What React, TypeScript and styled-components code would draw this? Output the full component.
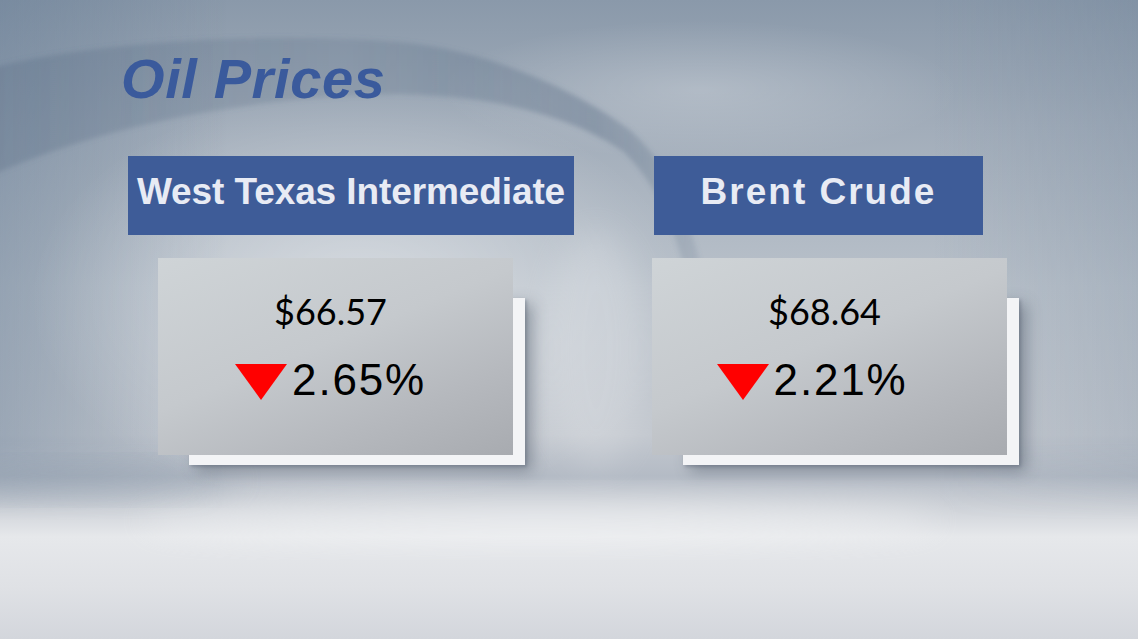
import React from "react";
import styled, { createGlobalStyle } from "styled-components";

const Global = createGlobalStyle`
  html, body { margin: 0; padding: 0; background: #d6d9de; overflow: hidden; }
  #root { width: 1138px; height: 639px; }
`;

const Stage = styled.div`
  width: 1138px;
  height: 639px;
  display: grid;
  overflow: hidden;
`;

const BackdropLayer = styled.svg`
  grid-area: 1 / 1;
  display: block;
`;

const Content = styled.main`
  grid-area: 1 / 1;
  display: flex;
  flex-direction: column;
  align-items: flex-start;
  padding: 51px 0 0 128px;
`;

const Title = styled.h1`
  margin: 0 0 49px -7px;
  font-family: "Liberation Sans", Arial, sans-serif;
  font-weight: 700;
  font-style: italic;
  font-size: 56px;
  line-height: 1;
  letter-spacing: 0.6px;
  color: #3a5a9c;
`;

const Row = styled.div`
  display: flex;
  gap: 78px;
  align-items: flex-start;
`;

const Column = styled.section`
  display: flex;
  flex-direction: column;
  align-items: flex-start;
  gap: 23px;
`;

const Header = styled.div<{ $width: number; $offset: number; $spacing: number }>`
  width: ${(p) => p.$width}px;
  height: 79px;
  margin-left: ${(p) => p.$offset}px;
  box-sizing: border-box;
  padding-top: 17px;
  background: #3e5c98;
  display: flex;
  justify-content: center;
  font-family: "Liberation Sans", Arial, sans-serif;
  font-weight: 700;
  font-size: 37px;
  line-height: 1;
  letter-spacing: ${(p) => p.$spacing}px;
  color: #e8ebf4;
  white-space: nowrap;
`;

const CardStack = styled.div<{ $offset: number }>`
  display: grid;
  margin-left: ${(p) => p.$offset}px;
`;

const Backing = styled.div`
  grid-area: 1 / 1;
  margin: 40px 0 0 31px;
  width: 336px;
  height: 167px;
  background: #f3f4f6;
  box-shadow: 7px 6px 14px rgba(70, 82, 98, 0.45), 2px 2px 3px rgba(70, 82, 98, 0.3);
`;

const Card = styled.div`
  grid-area: 1 / 1;
  width: 355px;
  height: 197px;
  box-sizing: border-box;
  padding: 35px 10px 0 0;
  display: flex;
  flex-direction: column;
  align-items: center;
  background: linear-gradient(158deg, #cfd4d7 0%, #c5c9cd 45%, #b5b8bd 75%, #a8abb0 100%);
`;

const Price = styled.div`
  font-family: Lato, "Open Sans", sans-serif;
  font-size: 36px;
  line-height: 1;
  color: #000;
`;

const ChangeRow = styled.div<{ $shift: number }>`
  display: flex;
  align-items: flex-start;
  gap: 5px;
  margin-top: 29px;
  margin-right: ${(p) => p.$shift}px;
`;

const DownArrow = styled.svg`
  display: block;
  margin-top: 6px;
`;

const Pct = styled.div`
  font-family: "Liberation Sans", Arial, sans-serif;
  font-size: 44px;
  line-height: 1;
  letter-spacing: 1.8px;
  color: #000;
`;

const Backdrop = () => (
  <BackdropLayer width="1138" height="639" viewBox="0 0 1138 639">
    <defs>
      <linearGradient id="bgV" x1="0" y1="0" x2="0" y2="1">
        <stop offset="0" stopColor="#8a99aa" />
        <stop offset="0.2" stopColor="#a2adba" />
        <stop offset="0.45" stopColor="#b9c1ca" />
        <stop offset="0.68" stopColor="#c3c8cf" />
        <stop offset="0.745" stopColor="#b4bbc5" />
        <stop offset="0.79" stopColor="#cdd1d7" />
        <stop offset="0.84" stopColor="#e6e8eb" />
        <stop offset="0.92" stopColor="#dfe1e5" />
        <stop offset="1" stopColor="#d3d6dc" />
      </linearGradient>
      <linearGradient id="bgH" x1="0" y1="0" x2="1" y2="0">
        <stop offset="0" stopColor="#5f7690" stopOpacity="0.4" />
        <stop offset="0.2" stopColor="#5f7690" stopOpacity="0" />
        <stop offset="0.82" stopColor="#5f7690" stopOpacity="0" />
        <stop offset="1" stopColor="#5f7690" stopOpacity="0.18" />
      </linearGradient>
      <linearGradient id="bgFade" x1="0" y1="0" x2="0" y2="1">
        <stop offset="0" stopColor="#fff" stopOpacity="1" />
        <stop offset="0.85" stopColor="#fff" stopOpacity="1" />
        <stop offset="1" stopColor="#fff" stopOpacity="0" />
      </linearGradient>
      <mask id="topMask">
        <rect width="1138" height="520" fill="url(#bgFade)" />
      </mask>
      <radialGradient id="glow" cx="0.5" cy="0.5" r="0.5">
        <stop offset="0" stopColor="#ffffff" stopOpacity="0.45" />
        <stop offset="1" stopColor="#ffffff" stopOpacity="0" />
      </radialGradient>
      <linearGradient id="ribbon" x1="0" y1="0" x2="1" y2="0">
        <stop offset="0" stopColor="#5a6e86" stopOpacity="0.34" />
        <stop offset="0.5" stopColor="#5a6e86" stopOpacity="0.22" />
        <stop offset="0.85" stopColor="#5a6e86" stopOpacity="0.4" />
        <stop offset="1" stopColor="#5a6e86" stopOpacity="0.15" />
      </linearGradient>
      <filter id="soft" x="-10%" y="-10%" width="120%" height="120%">
        <feGaussianBlur stdDeviation="2.5" />
      </filter>
      <filter id="wide" x="-50%" y="-50%" width="200%" height="200%">
        <feGaussianBlur stdDeviation="16" />
      </filter>
    </defs>
    <rect width="1138" height="639" fill="url(#bgV)" />
    <rect width="1138" height="520" fill="url(#bgH)" mask="url(#topMask)" />
    <ellipse cx="700" cy="90" rx="260" ry="70" fill="url(#glow)" opacity="0.5" />
    <ellipse cx="360" cy="300" rx="330" ry="210" fill="url(#glow)" />
    <ellipse cx="596" cy="350" rx="50" ry="120" fill="#ffffff" opacity="0.16" filter="url(#wide)" />
    <ellipse cx="540" cy="520" rx="400" ry="20" fill="#ffffff" opacity="0.4" filter="url(#wide)" />
    <ellipse cx="80" cy="480" rx="160" ry="14" fill="#7f90a3" opacity="0.3" filter="url(#wide)" />
    <path
      d="M -10 68 C 80 45, 240 30, 400 42 C 490 50, 580 92, 630 130 C 662 158, 684 200, 700 262
         L 684 266 C 670 215, 652 180, 624 152 C 575 118, 500 96, 400 94 C 260 96, 110 122, -10 176 Z"
      fill="url(#ribbon)"
      filter="url(#soft)"
    />
  </BackdropLayer>
);

type Quote = {
  name: string;
  headerWidth: number;
  headerOffset: number;
  spacing: number;
  cardOffset: number;
  price: string;
  change: string;
  shift: number;
};

const quotes: Quote[] = [
  {
    name: "West Texas Intermediate",
    headerWidth: 446,
    headerOffset: 0,
    spacing: -0.1,
    cardOffset: 30,
    price: "$66.57",
    change: "2.65%",
    shift: 0,
  },
  {
    name: "Brent Crude",
    headerWidth: 329,
    headerOffset: 2,
    spacing: 2,
    cardOffset: 0,
    price: "$68.64",
    change: "2.21%",
    shift: 25,
  },
];

export default function App() {
  return (
    <>
      <Global />
      <Stage>
        <Backdrop />
        <Content>
          <Title>Oil Prices</Title>
          <Row>
            {quotes.map((q) => (
              <Column key={q.name}>
                <Header $width={q.headerWidth} $offset={q.headerOffset} $spacing={q.spacing}>
                  {q.name}
                </Header>
                <CardStack $offset={q.cardOffset}>
                  <Backing />
                  <Card>
                    <Price>{q.price}</Price>
                    <ChangeRow $shift={q.shift}>
                      <DownArrow width="52" height="36" viewBox="0 0 52 36">
                        <polygon points="0,0 52,0 26,36" fill="#ff0000" />
                      </DownArrow>
                      <Pct>{q.change}</Pct>
                    </ChangeRow>
                  </Card>
                </CardStack>
              </Column>
            ))}
          </Row>
        </Content>
      </Stage>
    </>
  );
}
